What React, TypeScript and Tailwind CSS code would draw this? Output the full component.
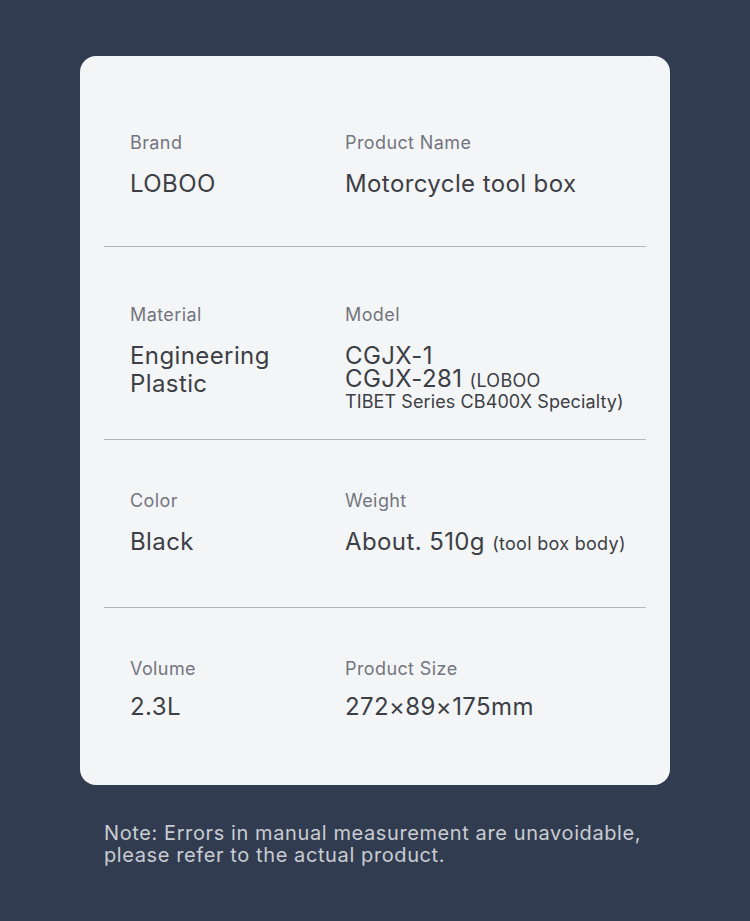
import React from 'react';

type Spec = { label: string; value: React.ReactNode };

const rows: { left: Spec; right: Spec; pad: string; gap: string }[] = [
  {
    left: { label: 'Brand', value: 'LOBOO' },
    right: { label: 'Product Name', value: 'Motorcycle tool box' },
    pad: 'pt-[75px] pb-[48px]',
    gap: 'mt-[15px]',
  },
  {
    left: {
      label: 'Material',
      value: (
        <>
          Engineering
          <br />
          Plastic
        </>
      ),
    },
    right: {
      label: 'Model',
      value: (
        <div className="pt-[1px]">
          <div className="leading-[25px]">CGJX-1</div>
          <div className="leading-[22px]">
            CGJX-281 <span className="text-[18px] tracking-[0.3px]">(LOBOO</span>
          </div>
          <div className="text-[18px] leading-[20px] tracking-[0.1px]">TIBET Series CB400X Specialty)</div>
        </div>
      ),
    },
    pad: 'pt-[56px] pb-[27px]',
    gap: 'mt-[15px]',
  },
  {
    left: { label: 'Color', value: 'Black' },
    right: {
      label: 'Weight',
      value: (
        <>
          About. 510g <span className="text-[18px] tracking-[0.3px]">(tool box body)</span>
        </>
      ),
    },
    pad: 'pt-[49px] pb-[49px]',
    gap: 'mt-[15px]',
  },
  {
    left: { label: 'Volume', value: '2.3L' },
    right: { label: 'Product Size', value: '272×89×175mm' },
    pad: 'pt-[49px] pb-[64px]',
    gap: 'mt-[12px]',
  },
];

function Cell({ spec, gap }: { spec: Spec; gap: string }) {
  return (
    <div className="flex flex-col">
      <span className="text-[18px] leading-[24px] tracking-[0.4px] text-[#73767e]">{spec.label}</span>
      <div className={`${gap} text-[24px] leading-[28px] tracking-[0.4px] text-[#3c3f45]`}>
        {spec.value}
      </div>
    </div>
  );
}

export default function App() {
  return (
    <div
      className="min-h-[921px] w-[750px] bg-[#323c50] pt-[56px]"
      style={{ fontFamily: 'Inter, "Open Sans", sans-serif' }}
    >
      <div className="mx-[80px] rounded-[16px] bg-[#f4f5f7] px-[24px]">
        {rows.map((row, i) => (
          <div
            key={i}
            className={`grid grid-cols-[215px_1fr] pl-[26px] ${row.pad} ${
              i < rows.length - 1 ? 'border-b border-[#b4b6ba]' : ''
            }`}
          >
            <Cell spec={row.left} gap={row.gap} />
            <Cell spec={row.right} gap={row.gap} />
          </div>
        ))}
      </div>
      <p className="mt-[37px] px-[104px] text-[20px] leading-[22px] tracking-[0.6px] text-[#c9ccd2]">
        Note: Errors in manual measurement are unavoidable, please refer to the actual product.
      </p>
    </div>
  );
}
